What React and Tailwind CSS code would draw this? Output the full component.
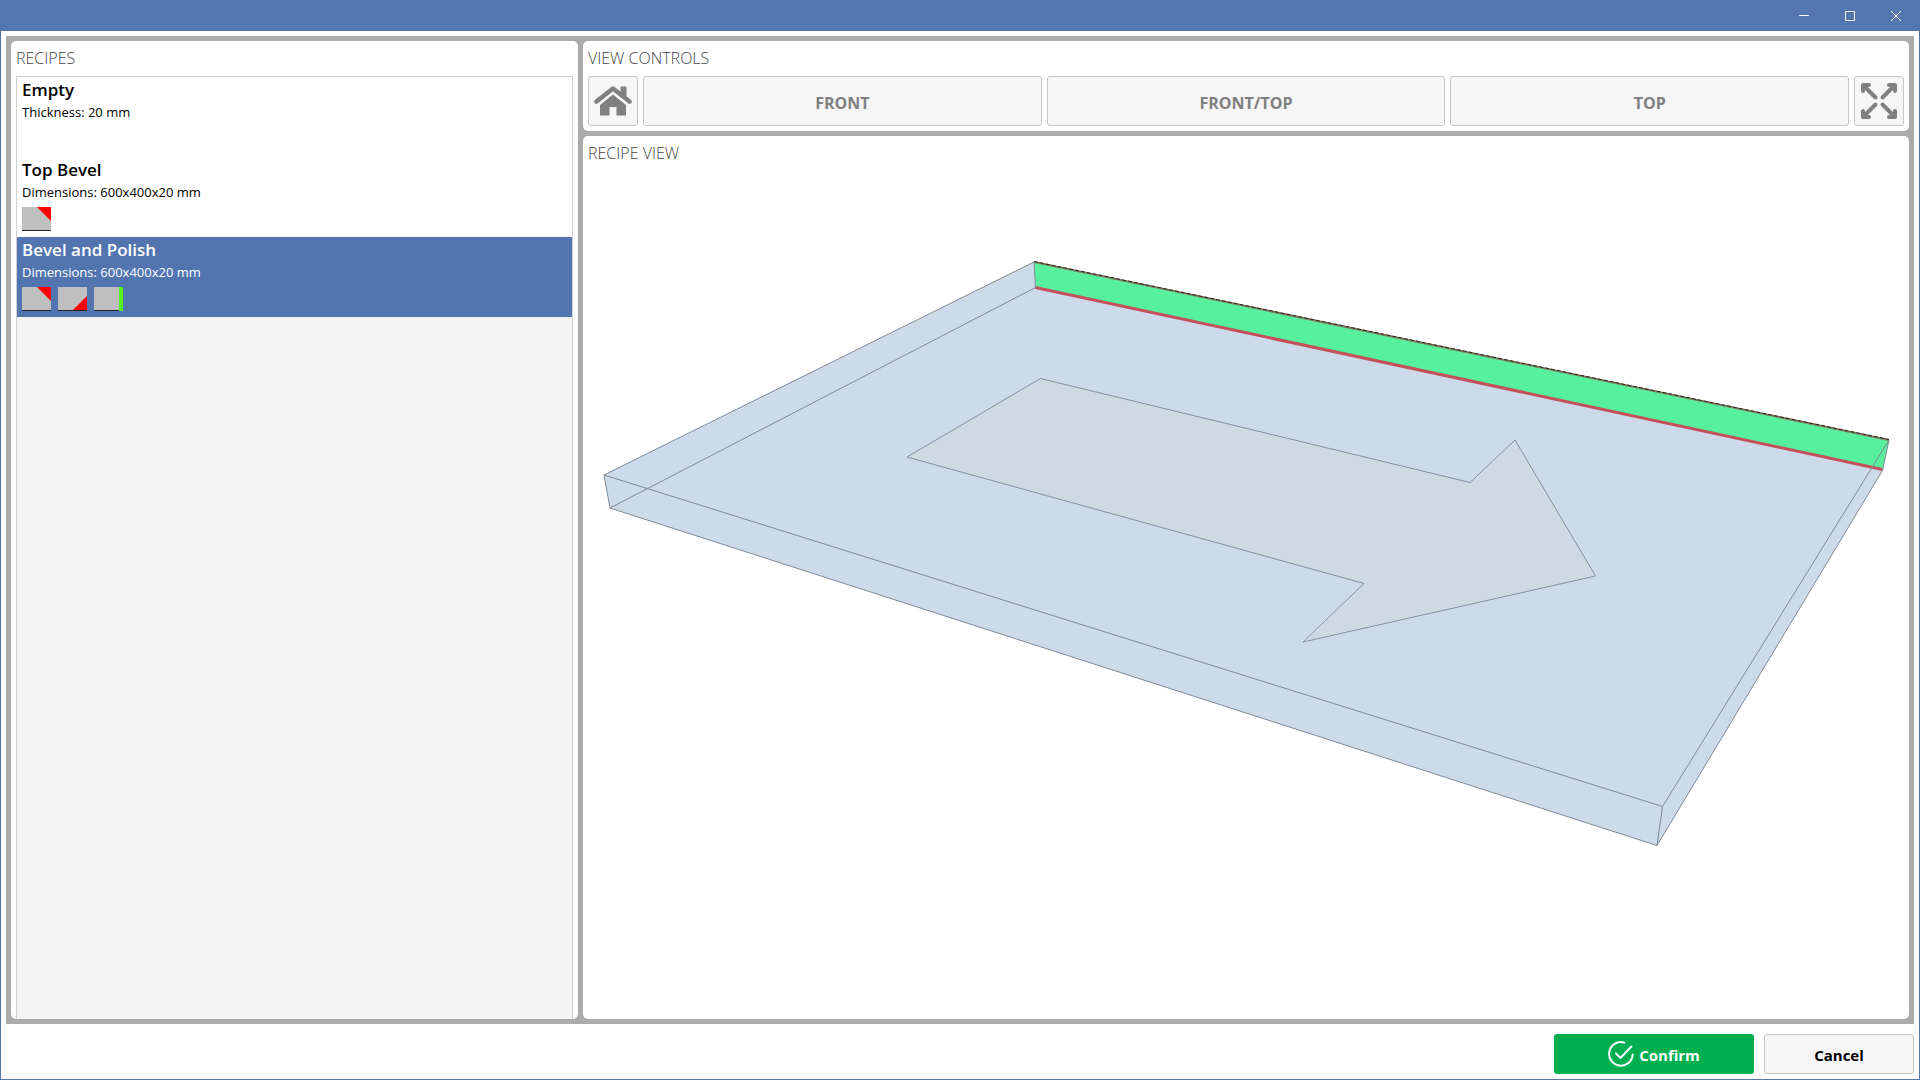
import { useState } from "react";

// Every recipe in the list. `edges` are the little operation icons under the text.
const RECIPES = [
  { name: "Empty", info: "Thickness: 20 mm", edges: [] },
  { name: "Top Bevel", info: "Dimensions: 600x400x20 mm", edges: ["top"] },
  {
    name: "Bevel and Polish",
    info: "Dimensions: 600x400x20 mm",
    edges: ["top", "bottom", "polish"],
  },
];

const VIEWS = ["FRONT", "FRONT/TOP", "TOP"];

// Side profile of the glass with the machined edge highlighted
const EdgeIcon = ({ kind }) => (
  <svg width="29" height="24" viewBox="0 0 29 24" aria-hidden="true">
    <rect width="29" height="24" fill="#bfbfbf" />
    {kind === "top" && <path d="M15 0H29V14Z" fill="#ff0000" />}
    {kind === "bottom" && <path d="M15 23H29V9Z" fill="#ff0000" />}
    <rect y="23" width="29" height="1" fill="#202428" />
    {kind === "polish" && <rect x="25" width="4" height="24" fill="#55f11c" />}
  </svg>
);

const HomeIcon = () => (
  <svg width="38" height="30" viewBox="0 0 38 30" aria-hidden="true">
    <path d="M27 1H32V12L27 7Z" fill="#808080" stroke="#808080" strokeLinejoin="round" />
    <path
      d="M2.5 15.5L19 2.5L35.5 15.5"
      fill="none"
      stroke="#808080"
      strokeWidth="4.5"
      strokeLinecap="round"
      strokeLinejoin="round"
    />
    <path d="M19 8.5L32 19V29.5H22.5V21H15.5V29.5H6V19Z" fill="#808080" />
  </svg>
);

const ExpandIcon = () => (
  <svg width="38" height="38" viewBox="0 0 38 38" aria-hidden="true">
    <g
      fill="none"
      stroke="#808080"
      strokeWidth="4"
      strokeLinecap="round"
      strokeLinejoin="round"
    >
      <path d="M15.5 15.5L3 3M3 9V3H9" />
      <path d="M22.5 15.5L35 3M29 3H35V9" />
      <path d="M15.5 22.5L3 35M3 29V35H9" />
      <path d="M22.5 22.5L35 35M29 35H35V29" />
    </g>
  </svg>
);

const CheckIcon = () => (
  <svg width="26" height="26" viewBox="0 0 26 26" aria-hidden="true">
    <g fill="none" stroke="#fff" strokeWidth="2" strokeLinecap="round" strokeLinejoin="round">
      <path d="M16.5 1.6A11.8 11.8 0 1 0 24.7 13.5" />
      <path d="M8 12.5L12.5 17L23.5 5.5" />
    </g>
  </svg>
);

// 3D preview of the glass plate, the arrow shows the travel direction
const GlassView = () => (
  <svg
    viewBox="583 166 1326 853"
    className="min-h-0 w-full flex-1"
    role="img"
    aria-label="Glass plate preview"
  >
    {/* Plate silhouette */}
    <polygon
      points="604,475 1034,262 1889,440 1882.5,470.5 1657,845.5 610,508"
      fill="#ccdaea"
    />
    {/* Travel direction */}
    <polygon
      points="1040.5,378.5 1470,482.5 1515,440 1595.5,576 1303,642 1364,583.5 907,457"
      fill="#cfd9e4"
      stroke="#8490a0"
      strokeWidth="1"
    />
    {/* Polished back edge */}
    <polygon points="1034,262 1889,440 1882.5,470 1035.5,287.5" fill="#57f09f" />
    <path d="M1035.5 287.5L1882.5 469.5" stroke="#c4505c" strokeWidth="3" />
    <path d="M1034 262L1889 440" stroke="#7f7a5a" strokeWidth="2" />
    <path d="M1034 261.5L1889 439.5" stroke="#302020" strokeWidth="1" strokeDasharray="4 2" />
    {/* Wireframe */}
    <g fill="none" stroke="#7f8a96" strokeWidth="1">
      <path d="M1034 262L604 475L1662.5 806.5L1889 440" />
      <path d="M1035.5 287.5L610 508L1657 845.5L1882.5 470.5" />
      <path d="M604 475L610 508M1034 262L1035.5 287.5M1889 440L1882.5 470.5M1662.5 806.5L1657 845.5" />
    </g>
  </svg>
);

const PanelTitle = ({ children }) => (
  <h2 className="text-[16px] leading-[20px] font-light text-[#444444]">{children}</h2>
);

const WindowBar = () => (
  <header className="flex h-[31px] justify-end bg-[#5477b2] pr-px">
    <button aria-label="Minimize" className="flex w-[46px] items-center justify-center">
      <svg width="10" height="10" viewBox="0 0 10 10">
        <path d="M0 4.5H10" stroke="#fff" />
      </svg>
    </button>
    <button aria-label="Maximize" className="flex w-[46px] items-center justify-center">
      <svg width="10" height="10" viewBox="0 0 10 10">
        <path d="M.5.5H9.5V9.5H.5Z" fill="none" stroke="#fff" />
      </svg>
    </button>
    <button aria-label="Close" className="flex w-[46px] items-center justify-center">
      <svg width="10" height="10" viewBox="0 0 10 10">
        <path d="M0 0L10 10M10 0L0 10" stroke="#fff" />
      </svg>
    </button>
  </header>
);

export default function App() {
  const [selected, setSelected] = useState(2); // Index of the highlighted recipe

  const viewButton =
    "flex h-[50px] items-center justify-center rounded-[3px] border border-[#c6c6c6] bg-[#f6f6f6]";

  return (
    <div className="flex min-h-screen flex-col bg-[#5477b2] font-['Open_Sans','Noto_Sans',sans-serif]">
      <WindowBar />

      <div className="mx-px mb-px flex flex-1 flex-col bg-white p-[5px]">
        {/* Gray frame around all panels */}
        <main className="flex flex-1 gap-[5px] bg-[#ababab] p-[5px]">
          {/* Recipe list */}
          <section className="flex w-[30%] max-w-[567px] flex-col rounded-[5px] bg-white px-[5px] pt-[7px]">
            <PanelTitle>RECIPES</PanelTitle>
            <ul className="mt-[8px] flex-1 border border-b-0 border-[#cfcfcf] bg-[#f4f4f4]">
              {RECIPES.map((recipe, i) => (
                <li key={recipe.name}>
                  <button
                    onClick={() => setSelected(i)}
                    className={`flex h-[80px] w-full flex-col items-start px-[5px] text-left ${
                      selected === i ? "bg-[#5275b0] text-white" : "bg-white text-black"
                    }`}
                  >
                    <span className="text-[17px] leading-[26px] font-semibold">{recipe.name}</span>
                    <span className="text-[13px] leading-[18px]">{recipe.info}</span>
                    <span className="mt-[6px] flex gap-[7px]">
                      {recipe.edges.map((kind) => (
                        <EdgeIcon key={kind} kind={kind} />
                      ))}
                    </span>
                  </button>
                </li>
              ))}
            </ul>
          </section>

          <div className="flex flex-1 flex-col gap-[5px]">
            {/* Camera presets */}
            <section className="rounded-[5px] bg-white px-[5px] pt-[7px] pb-[5px]">
              <PanelTitle>VIEW CONTROLS</PanelTitle>
              <div className="mt-[8px] flex gap-[5px]">
                <button aria-label="Home" className={`${viewButton} w-[50px]`}>
                  <HomeIcon />
                </button>
                {VIEWS.map((view) => (
                  <button
                    key={view}
                    className={`${viewButton} flex-1 pt-[3px] text-[16px] font-bold text-[#808080]`}
                  >
                    {view}
                  </button>
                ))}
                <button aria-label="Fit to window" className={`${viewButton} w-[50px]`}>
                  <ExpandIcon />
                </button>
              </div>
            </section>

            <section className="flex flex-1 flex-col rounded-[5px] bg-white pt-[7px]">
              <div className="px-[5px] pb-[3px]">
                <PanelTitle>RECIPE VIEW</PanelTitle>
              </div>
              <GlassView />
            </section>
          </div>
        </main>

        <footer className="flex justify-end gap-[10px] pt-[10px] text-[15px] font-bold">
          <button className="flex h-[40px] w-[200px] items-center justify-center gap-[5px] rounded-[3px] bg-[#00b050] text-white">
            <CheckIcon />
            <span className="pt-[2px]">Confirm</span>
          </button>
          <button className="h-[40px] w-[150px] rounded-[3px] border border-[#c6c6c6] bg-[#f6f6f6] pt-[2px] text-black">
            Cancel
          </button>
        </footer>
      </div>
    </div>
  );
}
